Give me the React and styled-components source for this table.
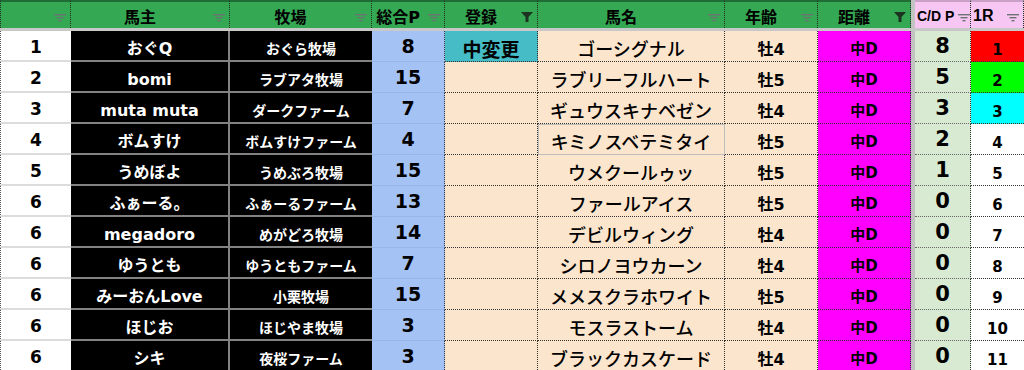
import React from "react";
import styled, { createGlobalStyle } from "styled-components";

const GlobalStyle = createGlobalStyle`
  body {
    margin: 0;
    background: #fff;
    font-family: "DejaVu Sans", "Noto Sans CJK JP", sans-serif;
    color: #000;
  }
`;

const rows = [
  { rank: 1, owner: "おぐQ", farm: "おぐら牧場", pt: 8, entry: "中変更", horse: "ゴーシグナル", age: "牡4", cd: 8, race: 1, raceBg: "#ff0000" },
  { rank: 2, owner: "bomi", farm: "ラブアタ牧場", pt: 15, horse: "ラブリーフルハート", age: "牡5", cd: 5, race: 2, raceBg: "#00ff00" },
  { rank: 3, owner: "muta muta", farm: "ダークファーム", pt: 7, horse: "ギュウスキナベゼン", age: "牡4", cd: 3, race: 3, raceBg: "#00ffff" },
  { rank: 4, owner: "ボムすけ", farm: "ボムすけファーム", pt: 4, horse: "キミノスベテミタイ", age: "牡5", cd: 2, race: 4, boxed: true },
  { rank: 5, owner: "うめぼよ", farm: "うめぶろ牧場", pt: 15, horse: "ウメクールゥッ", age: "牡5", cd: 1, race: 5 },
  { rank: 6, owner: "ふぁーる。", farm: "ふぁーるファーム", pt: 13, horse: "ファールアイス", age: "牡5", cd: 0, race: 6 },
  { rank: 6, owner: "megadoro", farm: "めがどろ牧場", pt: 14, horse: "デビルウィング", age: "牡4", cd: 0, race: 7 },
  { rank: 6, owner: "ゆうとも", farm: "ゆうともファーム", pt: 7, horse: "シロノヨウカーン", age: "牡4", cd: 0, race: 8 },
  { rank: 6, owner: "みーおんLove", farm: "小栗牧場", pt: 15, horse: "メメスクラホワイト", age: "牡5", cd: 0, race: 9 },
  { rank: 6, owner: "ほじお", farm: "ほじやま牧場", pt: 3, horse: "モスラストーム", age: "牡4", cd: 0, race: 10 },
  { rank: 6, owner: "シキ", farm: "夜桜ファーム", pt: 3, horse: "ブラックカスケード", age: "牡4", cd: 0, race: 11 },
];

const headers = [
  { label: "", filter: "plain" },
  { label: "馬主", filter: "plain" },
  { label: "牧場", filter: "plain" },
  { label: "総合P", filter: "plain" },
  { label: "登録", filter: "active" },
  { label: "馬名", filter: "plain" },
  { label: "年齢", filter: "plain" },
  { label: "距離", filter: "active" },
  { freeze: true },
  { label: "C/D P", filter: "plain", pink: true, latin: "14px" },
  { label: "1R", filter: "plain", pink: true, latin: "16px" },
];

const Sheet = styled.div`
  display: grid;
  grid-template-columns: 71px 159px 142px 73px 93px 187px 93px 93px 4px 56px 53px;
  grid-template-rows: 28px 3px;
  grid-auto-rows: 31px;
  width: 1024px;
  height: 370px;
  overflow: hidden;
`;

const HeadCell = styled.div`
  display: flex;
  align-items: center;
  box-sizing: border-box;
  background: ${(p) => (p.$pink ? "#f7c6f3" : "#34a853")};
  border-top: 2px solid ${(p) => (p.$pink ? "#c9a0c6" : "#1f6d35")};
  border-right: 1px dotted #1b2d1f;
  border-left: ${(p) => (p.$first ? "1px dotted #1b2d1f" : "none")};
  font-weight: 700;
  font-size: 16px;
  white-space: nowrap;
  overflow: hidden;
`;

const HeadLabel = styled.span`
  flex: 1;
  text-align: ${(p) => (p.$latin ? "left" : "center")};
  padding-top: 1px;
  padding-left: ${(p) => (p.$latin ? "2px" : "0")};
  ${(p) => p.$latin && `font-family: "Liberation Sans", sans-serif; font-size: ${p.$latin};`}
`;

const FilterSlot = styled.span`
  width: 20px;
  flex: none;
  display: flex;
  justify-content: center;
  align-self: flex-end;
  margin-bottom: 6px;
`;

const FreezeCol = styled.div`
  background: #c3c3c3;
`;

const FreezeBand = styled.div`
  grid-column: 1 / -1;
  background: #c8c8c8;
`;

const Cell = styled.div`
  display: flex;
  align-items: flex-end;
  justify-content: center;
  box-sizing: border-box;
  padding-bottom: 3px;
  font-weight: 700;
  line-height: 1.15;
  white-space: nowrap;
  overflow: hidden;
  border-bottom: 1px dotted #333;
  border-right: 1px dotted #333;
`;

const RankCell = styled(Cell)`
  background: #fff;
  font-size: 17px;
  border-left: 1px dotted #555;
  border-right: none;
  border-bottom: 2px solid #dcdcdc;
  padding-bottom: 2px;
`;

const OwnerCell = styled(Cell)`
  background: #000;
  color: #fff;
  font-size: 16px;
  border-bottom: 2px solid #828282;
  border-right: 2px solid #828282;
  padding-bottom: 2px;
`;

const FarmCell = styled(OwnerCell)`
  font-size: 14px;
  border-right: none;
  padding-bottom: 3px;
`;

const PointCell = styled(Cell)`
  background: #a4c2f4;
  font-size: 19px;
  border-bottom: 1px solid #97b6ec;
  padding-bottom: 3px;
`;

const EntryCell = styled(Cell)`
  background: ${(p) => (p.$filled ? "#46bdc6" : "#fce5cd")};
  font-family: "Noto Sans CJK JP", sans-serif;
  font-size: 19px;
  padding-bottom: 1px;
`;

const HorseCell = styled(Cell)`
  background: #fce5cd;
  font-family: "Noto Sans CJK JP", sans-serif;
  font-weight: 500;
  font-size: 18px;
  line-height: 1.05;
  padding-bottom: 3px;
  ${(p) => p.$boxed && "outline: 1px solid #bdbdbd; outline-offset: -1px;"}
`;

const AgeCell = styled(Cell)`
  background: #fce5cd;
  font-size: 16px;
  padding-bottom: 2px;
`;

const DistCell = styled(Cell)`
  background: #ff00ff;
  font-size: 15px;
  padding-bottom: 3px;
`;

const CdCell = styled(Cell)`
  background: #d9ead3;
  font-size: 21px;
  border-bottom: 1px dotted #666;
  padding-bottom: 3px;
`;

const RaceCell = styled(Cell)`
  background: ${(p) => p.$bg || "#fff"};
  font-size: 15px;
  border-right: none;
  padding-bottom: 2px;
`;

function FilterIcon({ active }) {
  if (active) {
    return (
      <svg width="12" height="10" viewBox="0 0 12 10">
        <path d="M0 0 H12 L7.5 5 V10 H4.5 V5 Z" fill="#1d3322" />
      </svg>
    );
  }
  return (
    <svg width="12" height="8" viewBox="0 0 12 8">
      <rect x="0" y="0" width="12" height="1.4" fill="#6d7370" />
      <rect x="2.5" y="3" width="7" height="1.4" fill="#6d7370" />
      <rect x="4.5" y="6" width="3" height="1.4" fill="#6d7370" />
    </svg>
  );
}

export default function App() {
  return (
    <>
      <GlobalStyle />
      <Sheet>
        {headers.map((h, i) =>
          h.freeze ? (
            <FreezeCol key={i} />
          ) : (
            <HeadCell key={i} $pink={h.pink} $first={i === 0}>
              <HeadLabel $latin={h.latin}>{h.label}</HeadLabel>
              <FilterSlot>
                <FilterIcon active={h.filter === "active"} />
              </FilterSlot>
            </HeadCell>
          )
        )}
        <FreezeBand />
        {rows.map((r, i) => (
          <React.Fragment key={i}>
            <RankCell>{r.rank}</RankCell>
            <OwnerCell>{r.owner}</OwnerCell>
            <FarmCell>{r.farm}</FarmCell>
            <PointCell>{r.pt}</PointCell>
            <EntryCell $filled={!!r.entry}>{r.entry}</EntryCell>
            <HorseCell $boxed={r.boxed}>{r.horse}</HorseCell>
            <AgeCell>{r.age}</AgeCell>
            <DistCell>中D</DistCell>
            <FreezeCol />
            <CdCell>{r.cd}</CdCell>
            <RaceCell $bg={r.raceBg}>{r.race}</RaceCell>
          </React.Fragment>
        ))}
      </Sheet>
    </>
  );
}
